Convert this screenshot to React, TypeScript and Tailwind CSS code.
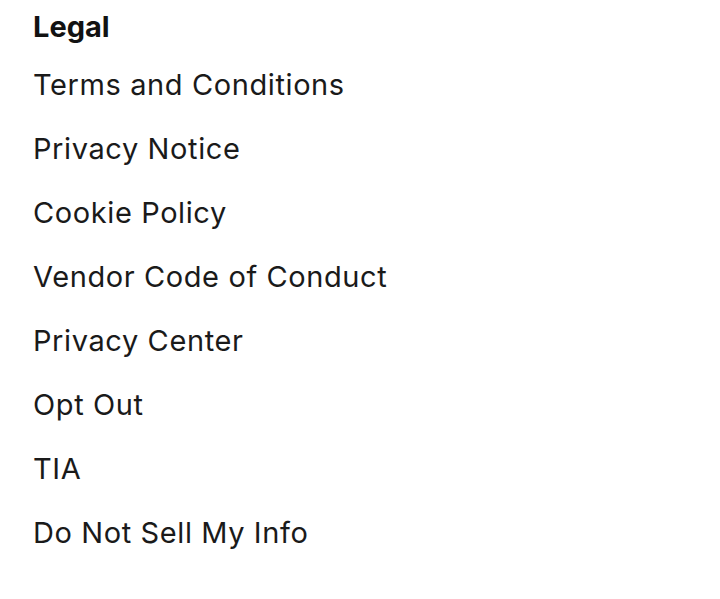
export default function App() {
  const items = [
    "Terms and Conditions",
    "Privacy Notice",
    "Cookie Policy",
    "Vendor Code of Conduct",
    "Privacy Center",
    "Opt Out",
    "TIA",
    "Do Not Sell My Info",
  ];
  return (
    <div className="w-[720px] h-[599px] bg-white pl-[33px] pt-[7px]" style={{ fontFamily: "Inter, sans-serif" }}>
      <div className="text-[29px] font-bold leading-[40px] text-[#121212]">Legal</div>
      <ul className="mt-[6px] flex flex-col">
        {items.map((t) => (
          <li key={t} className="text-[29px] leading-[64px] tracking-[0.6px] text-[#1a1a1a]">{t}</li>
        ))}
      </ul>
    </div>
  );
}
